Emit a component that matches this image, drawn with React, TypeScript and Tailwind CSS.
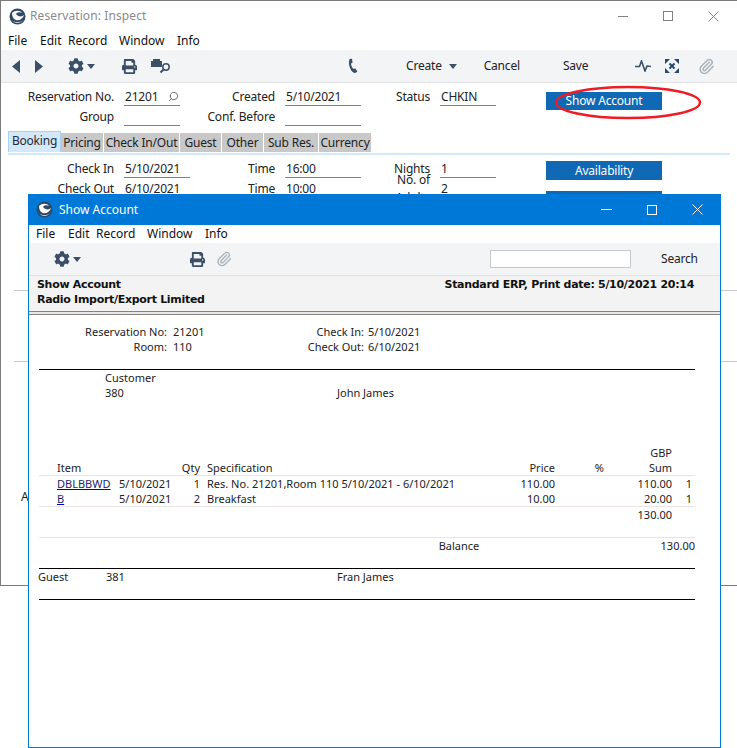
import React from "react";
import { FaCog, FaPrint } from "react-icons/fa";
import { Paperclip, Search } from "lucide-react";

const ui = "[font-family:'Noto_Sans','DejaVu_Sans',sans-serif]";
const navy = "#3b5068";

function Logo() {
  return (
    <svg width="17" height="17" viewBox="0 0 17 17">
      <circle cx="8.5" cy="8.5" r="8" fill="#2f4a68" />
      <path d="M3 5 C6 2 11 2 13 5 C11 4 8 4 7 6 C9 9 13 9 15 7 C14 11 10 13 7 12 C4 11 3 8 3 5Z" fill="#ffffff" />
      <path d="M3 12 C6 15 11 15 14 12 C11 16 6 16 3 12Z" fill="#dfe7ee" />
    </svg>
  );
}

function Tri({ className = "" }: { className?: string }) {
  return (
    <svg width="8" height="5" viewBox="0 0 8 5" className={className}>
      <polygon points="0,0 8,0 4,5" fill={navy} />
    </svg>
  );
}

function Menu({ className = "" }: { className?: string }) {
  return (
    <div className={`flex items-center h-full text-[12px] text-[#111] ${className}`}>
      <span className="w-[32px]">File</span>
      <span className="w-[28px] -ml-[0px]">Edit</span>
      <span className="w-[51px] ml-[0px]">Record</span>
      <span className="w-[58px]">Window</span>
      <span>Info</span>
    </div>
  );
}

function Field({ label, value, lw, fw, extra }: { label: string; value?: string; lw: number; fw: number; extra?: React.ReactNode }) {
  return (
    <div className="flex items-center h-[20px]">
      <span className="text-right text-[12px] text-[#222] pr-[10px] tracking-[-0.2px]" style={{ width: lw }}>{label}</span>
      <span className="relative h-[17px] border-b border-[#808080] pl-[1px] text-[12px] leading-[16px] text-[#222] tracking-[-0.2px]" style={{ width: fw }}>
        {value}
        {extra}
      </span>
    </div>
  );
}

function Tab({ t, w, active }: { t: string; w: number; active?: boolean }) {
  return (
    <div
      className={active
        ? "h-[21px] bg-[#d3e8f9] border border-b-0 border-[#a9d2f2] text-[12px] leading-[18px] text-[#1f2a36] text-center tracking-[-0.2px]"
        : "h-[19px] mt-[2px] bg-[#c8c8c8] text-[12px] leading-[19px] text-[#222] text-center tracking-[-0.2px] mr-[1px]"}
      style={{ width: w }}
    >
      {t}
    </div>
  );
}

const btn = "w-[116px] bg-[#0f69b4] text-white text-[12px] text-center tracking-[-0.2px]";

function OuterWindow() {
  return (
    <div className="absolute left-0 top-0 w-[737px] h-[586px] bg-white border-l border-b border-t border-[#7b7b7b] overflow-hidden">
      <div className="h-[30px] flex items-center pl-[8px] relative">
        <Logo />
        <span className="ml-[4px] text-[12px] text-[#8a8a8a] tracking-[0.1px]">Reservation: Inspect</span>
        <div className="ml-auto flex items-center text-[#7a7a7a]">
          <div className="w-[10px] h-px bg-[#808080] mr-[35px]" />
          <div className="w-[10px] h-[10px] border border-[#808080] mr-[35px]" />
          <svg width="11" height="11" viewBox="0 0 11 11" className="mr-[18px]"><path d="M0.5 0.5L10.5 10.5M10.5 0.5L0.5 10.5" stroke="#808080" /></svg>
        </div>
      </div>
      <div className="h-[19px] pl-[7px]"><Menu /></div>
      <div className="h-[33px] bg-[#f3f4f5] border-b border-[#e2e2e2] flex items-center relative text-[12px] text-[#222]">
        <svg width="8" height="13" viewBox="0 0 8 13" className="ml-[11px]"><polygon points="8,0 8,13 0,6.5" fill={navy} /></svg>
        <svg width="8" height="13" viewBox="0 0 8 13" className="ml-[15px]"><polygon points="0,0 0,13 8,6.5" fill={navy} /></svg>
        <FaCog size={16} color={navy} className="ml-[25px]" />
        <Tri className="ml-[3px]" />
        <FaPrint size={15} color={navy} className="ml-[27px]" />
        <span className="relative ml-[14px] w-[22px] h-[15px]">
          <svg width="21" height="15" viewBox="0 0 21 15">
            <rect x="0" y="2" width="11" height="6" fill={navy} />
            <rect x="2" y="0" width="7" height="2" fill={navy} />
            <circle cx="15" cy="8" r="3.2" fill="none" stroke={navy} strokeWidth="1.5" />
            <path d="M12.5 10.5L9.5 13.5" stroke={navy} strokeWidth="2" />
          </svg>
        </span>
        <svg width="11" height="16" viewBox="0 0 11 16" className="ml-[174px]"><path d="M2.5 1 L5 0.8 L5.6 4.8 L4 5.6 C4.2 7.8 5.2 10 6.6 11 L8.2 10.2 L10.4 13.4 L8.4 15 C4.4 15.2 0.4 7 2.5 1Z" fill={navy} /></svg>
        <span className="ml-[48px] tracking-[-0.2px]">Create</span>
        <Tri className="ml-[7px]" />
        <span className="ml-[27px] tracking-[-0.2px]">Cancel</span>
        <span className="ml-[43px] tracking-[-0.2px]">Save</span>
        <svg width="16" height="12" viewBox="0 0 16 12" className="ml-[47px]"><path d="M0 6.5L4.5 6.5L6.5 1L10 11L12 6L16 6.5" fill="none" stroke={navy} strokeWidth="1.6" /></svg>
        <svg width="14" height="14" viewBox="0 0 14 14" className="ml-[14px]">
          <path d="M4.5 4.5L9.5 9.5M9.5 4.5L4.5 9.5" stroke="#27496d" strokeWidth="2" />
          <path d="M0 0H5L0 5ZM14 0H9L14 5ZM0 14H5L0 9ZM14 14H9L14 9Z" fill="#27496d" />
        </svg>
        <Paperclip size={17} color="#a9b2bb" className="ml-[19px] -rotate-[0deg]" />
      </div>
      <div className="relative h-[502px]">
        <div className="flex pt-[4px]">
          <div className="flex flex-col">
            <Field label="Reservation No." lw={123} fw={56} value="21201" extra={<Search size={11} color="#666" className="absolute right-[1px] top-[2px] -scale-x-100" />} />
            <Field label="Group" lw={123} fw={56} />
          </div>
          <div className="flex flex-col">
            <Field label="Created" lw={105} fw={76} value="5/10/2021" />
            <Field label="Conf. Before" lw={105} fw={76} />
          </div>
          <div className="flex flex-col">
            <Field label="Status" lw={79} fw={56} value="CHKIN" />
          </div>
          <div className={`${btn} ml-[50px] h-[18px] mt-[5px] leading-[18px]`}>Show Account</div>
        </div>
        <div className="h-[22px] mt-[4px] ml-[7px] mr-[7px] flex border-b-[2px] border-[#d3e8f9] box-content h-[20px]">
          <Tab t="Booking" w={53} active />
          <Tab t="Pricing" w={42} />
          <Tab t="Check In/Out" w={75} />
          <Tab t="Guest" w={41} />
          <Tab t="Other" w={41} />
          <Tab t="Sub Res." w={54} />
          <Tab t="Currency" w={52} />
        </div>
        <div className="flex pt-[4px]">
          <div className="flex flex-col">
            <Field label="Check In" lw={123} fw={66} value="5/10/2021" />
            <Field label="Check Out" lw={123} fw={66} value="6/10/2021" />
          </div>
          <div className="flex flex-col">
            <Field label="Time" lw={95} fw={76} value="16:00" />
            <Field label="Time" lw={95} fw={76} value="10:00" />
          </div>
          <div className="flex flex-col">
            <Field label="Nights" lw={79} fw={56} value="1" />
            <Field label="No. of Adults" lw={79} fw={56} value="2" />
          </div>
          <div className="ml-[50px] flex flex-col gap-[11px] pt-[2px]">
            <div className={`${btn} h-[19px] leading-[19px]`}>Availability</div>
            <div className={`${btn} h-[19px] leading-[19px]`}>Rate Return</div>
          </div>
        </div>
        <div className="mt-[80px] ml-[13px] mr-0 border-t border-[#c8c8c8]" />
        <div className="mt-[70px] ml-[13px] mr-0 border-t border-[#c8c8c8]" />
        <div className="mt-[126px] ml-[20px] text-[12px] text-[#222]">Ac</div>
      </div>
    </div>
  );
}

type RowProps = { a?: React.ReactNode; d?: string; q?: string; s?: string; p?: string; pc?: string; t?: string; x?: string };

function Row({ a, d, q, s, p, pc, t, x }: RowProps) {
  return (
    <div className="flex h-[15px] leading-[15px] pl-[18px]">
      <span className="w-[62px]">{a}</span>
      <span className="w-[56px]">{d}</span>
      <span className="w-[25px] text-right">{q}</span>
      <span className="w-[305px] ml-[7px]">{s}</span>
      <span className="w-[43px] text-right">{p}</span>
      <span className="w-[49px] text-right">{pc}</span>
      <span className="w-[68px] text-right">{t}</span>
      <span className="w-[20px] text-right">{x}</span>
    </div>
  );
}

function Link({ children }: { children: React.ReactNode }) {
  return <span className="underline text-[#1a2a6a] decoration-[#0000cc]">{children}</span>;
}

function Report() {
  const txt = "text-[11px] text-[#222]";
  return (
    <div className={`flex-1 bg-white ${txt}`}>
      <div className="pt-[9px] w-[656px] ml-[10px]">
        <div className="flex h-[15px] leading-[15px]">
          <span className="w-[128px] text-right">Reservation No:</span>
          <span className="w-[40px] ml-[6px]">21201</span>
          <span className="w-[151px] text-right">Check In:</span>
          <span className="ml-[4px]">5/10/2021</span>
        </div>
        <div className="flex h-[15px] leading-[15px]">
          <span className="w-[128px] text-right">Room:</span>
          <span className="w-[40px] ml-[6px]">110</span>
          <span className="w-[151px] text-right">Check Out:</span>
          <span className="ml-[4px]">6/10/2021</span>
        </div>
        <div className="mt-[15px] border-t border-black" />
        <div className="flex h-[15px] leading-[15px] pl-[66px]">Customer</div>
        <div className="flex h-[15px] leading-[15px]">
          <span className="w-[298px] pl-[66px]">380</span>
          <span>John James</span>
        </div>
        <div className="mt-[45px]" />
        <Row t="GBP" />
        <Row a="Item" q="Qty" s="Specification" p="Price" pc="%" t="Sum" />
        <div className="border-t border-[#e9e4e2]" />
        <Row a={<Link>DBLBBWD</Link>} d="5/10/2021" q="1" s="Res. No. 21201,Room 110 5/10/2021 - 6/10/2021" p="110.00" t="110.00" x="1" />
        <Row a={<Link>B</Link>} d="5/10/2021" q="2" s="Breakfast" p="10.00" t="20.00" x="1" />
        <div className="border-t border-[#e9e4e2]" />
        <Row t="130.00" />
        <div className="mt-[15px] border-t border-[#e9e4e2]" />
        <div className="flex h-[15px] leading-[15px]">
          <span className="w-[407px] pl-[0px]" />
          <span className="w-[226px]">Balance</span>
          <span>130.00</span>
        </div>
        <div className="mt-[15px] border-t border-black" />
        <div className="flex h-[15px] leading-[15px] -ml-[1px]">
          <span className="w-[68px]">Guest</span>
          <span className="w-[231px]">381</span>
          <span>Fran James</span>
        </div>
        <div className="mt-[15px] border-t border-black" />
      </div>
    </div>
  );
}

function InnerWindow() {
  return (
    <div className="absolute left-[28px] top-[194px] w-[693px] h-[554px] bg-white border border-t-0 border-[#0078d7] flex flex-col">
      <div className="h-[31px] bg-[#0078d7] flex items-center pl-[8px] text-white shrink-0 -mx-px">
        <Logo />
        <span className="ml-[6px] text-[12px]">Show Account</span>
        <div className="ml-auto flex items-center">
          <div className="w-[11px] h-px bg-white mr-[35px]" />
          <div className="w-[10px] h-[10px] border border-white mr-[35px]" />
          <svg width="11" height="11" viewBox="0 0 11 11" className="mr-[18px]"><path d="M0.5 0.5L10.5 10.5M10.5 0.5L0.5 10.5" stroke="#fff" /></svg>
        </div>
      </div>
      <div className="h-[18px] pl-[7px] shrink-0"><Menu /></div>
      <div className="h-[33px] shrink-0 bg-[#f3f4f5] border-b border-[#e2e2e2] flex items-center text-[12px] text-[#222]">
        <FaCog size={16} color={navy} className="ml-[25px]" />
        <Tri className="ml-[3px]" />
        <FaPrint size={15} color={navy} className="ml-[109px]" />
        <Paperclip size={16} color="#a9b2bb" className="ml-[11px]" />
        <div className="ml-[258px] w-[141px] h-[18px] bg-white border border-[#c8c8c8]" />
        <span className="ml-[30px] tracking-[-0.2px]">Search</span>
      </div>
      <div className="h-[35px] shrink-0 bg-[#f3f3f3] pl-[8px] pr-[26px] pt-[1px] text-[11px] leading-[15px] font-bold text-[#111] [font-family:'DejaVu_Sans',sans-serif] tracking-[-0.3px]">
        <div className="flex justify-between"><span>Show Account</span><span>Standard ERP, Print date: 5/10/2021 20:14</span></div>
        <div>Radio Import/Export Limited</div>
      </div>
      <div className="h-[4px] shrink-0 border-y border-[#8a827c] bg-[#e8e8e8]" />
      <Report />
    </div>
  );
}

export default function App() {
  return (
    <div className={`relative w-[737px] h-[748px] overflow-hidden bg-white ${ui}`}>
      <OuterWindow />
      <svg width="148" height="35" viewBox="0 0 148 35" className="absolute left-[554px] top-[85px]">
        <ellipse cx="74" cy="17.5" rx="72" ry="15.5" fill="none" stroke="#ee1c25" strokeWidth="2.5" />
      </svg>
      <InnerWindow />
    </div>
  );
}
